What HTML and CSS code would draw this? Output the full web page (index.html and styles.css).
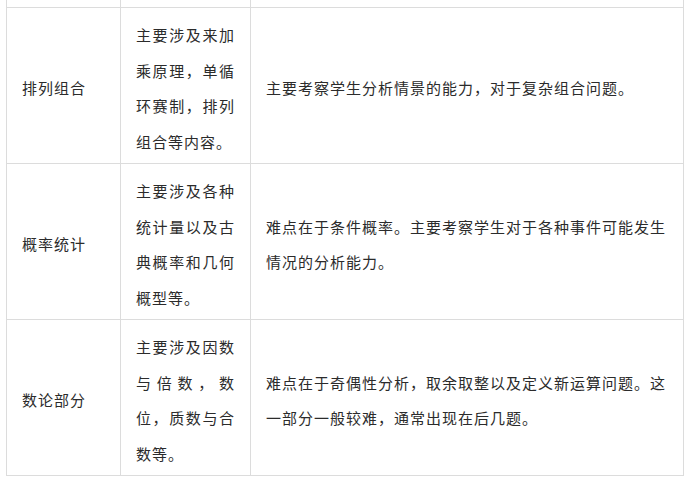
FILE: index.html
```html
<!DOCTYPE html>
<html lang="zh-CN">
<head>
<meta charset="utf-8">
<title>题型分析</title>
<link rel="stylesheet" href="styles.css">
</head>
<body>
<div class="wrap">
<table class="grid">
  <colgroup>
    <col class="c1">
    <col class="c2">
    <col class="c3">
  </colgroup>
  <tr class="cut"><td></td><td></td><td></td></tr>
  <tr>
    <td class="name">排列组合</td>
    <td class="scope">主要涉及来加乘原理，单循环赛制，排列组合等内容。</td>
    <td class="desc">主要考察学生分析情景的能力，对于复杂组合问题。</td>
  </tr>
  <tr>
    <td class="name">概率统计</td>
    <td class="scope">主要涉及各种统计量以及古典概率和几何概型等。</td>
    <td class="desc">难点在于条件概率。主要考察学生对于各种事件可能发生情况的分析能力。</td>
  </tr>
  <tr>
    <td class="name">数论部分</td>
    <td class="scope">主要涉及因数与倍数，数位，质数与合数等。</td>
    <td class="desc">难点在于奇偶性分析，取余取整以及定义新运算问题。这一部分一般较难，通常出现在后几题。</td>
  </tr>
</table>
</div>
</body>
</html>
```
FILE: styles.css
```css
html, body {
  margin: 0;
  padding: 0;
  background: #fff;
}
.wrap {
  padding: 0 6px 0 6px;
}
.grid {
  border-collapse: collapse;
  table-layout: fixed;
  width: 677px;
  font-family: "Noto Sans CJK SC", "Microsoft YaHei", sans-serif;
  font-size: 15px;
  letter-spacing: 1px;
  line-height: 35.5px;
  color: #2b2b2b;
}
.c1 { width: 114px; }
.c2 { width: 130px; }
.c3 { width: 433px; }
.grid td {
  border: 1px solid #dcdcdc;
  padding: 9px 15px 4px 15px;
  vertical-align: middle;
}
.grid .cut td {
  border-top: none;
  height: 7px;
  padding: 0;
  line-height: 0;
}
.scope {
  text-align: justify;
}
```
